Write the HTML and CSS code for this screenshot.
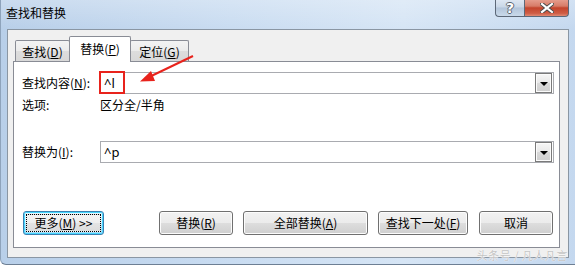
FILE: index.html
```html
<!DOCTYPE html>
<html>
<head>
<meta charset="utf-8">
<link rel="stylesheet" href="styles.css">
</head>
<body>
<div class="window">
  <div class="titlebar">
    <span class="title">查找和替换</span>
    <div class="caps">
      <div class="cap help">?</div>
      <div class="cap close">
        <svg width="14" height="10" viewBox="0 0 14 10"><path d="M2 1 L12 9 M12 1 L2 9" stroke="#4a4a4a" stroke-width="4" stroke-linecap="square"/><path d="M2 1 L12 9 M12 1 L2 9" stroke="#fff" stroke-width="2.2" stroke-linecap="square"/></svg>
      </div>
    </div>
  </div>
  <div class="client">
    <div class="tabs">
      <div class="tab t1">查找(<u>D</u>)</div>
      <div class="tab active">替换(<u>P</u>)</div>
      <div class="tab t3">定位(<u>G</u>)</div>
    </div>
    <div class="panel">
      <div class="row r1">
        <span class="lbl">查找内容(<u>N</u>):</span>
        <div class="combo">
          <span class="val">^l</span>
          <span class="mark"></span>
          <div class="drop"><span class="tri"></span></div>
        </div>
      </div>
      <div class="row r2">
        <span class="lbl">选项:</span>
        <span>区分全/半角</span>
      </div>
      <div class="row r3">
        <span class="lbl">替换为(<u>I</u>):</span>
        <div class="combo">
          <span class="val">^p</span>
          <div class="drop"><span class="tri"></span></div>
        </div>
      </div>
      <div class="btnrow">
        <div class="btn more"><span class="focus">更多(<u>M</u>) &gt;&gt;</span></div>
        <div class="group">
          <div class="btn w74">替换(<u>R</u>)</div>
          <div class="btn w125">全部替换(<u>A</u>)</div>
          <div class="btn w90">查找下一处(<u>F</u>)</div>
          <div class="btn w74 last">取消</div>
        </div>
      </div>
    </div>
  </div>
  <svg class="arrow" width="70" height="40" viewBox="0 0 70 40">
    <path d="M62 1 L14 24" stroke="#e8231c" stroke-width="2" fill="none"/>
    <path d="M9 26.5 L20 16 L24 26 Z" fill="#e8231c"/>
  </svg>
  <div class="watermark">头条号 / 凡人凡言</div>
</div>
</body>
</html>
```
FILE: styles.css
```css
html, body {
  margin: 0;
  padding: 0;
  background: #ffffff;
}
.window {
  position: relative;
  width: 575px;
  height: 264px;
  border-bottom: 1px solid #6d7f94;
  border-left: 1px solid #8ea3bb;
  box-sizing: content-box;
  border-bottom-left-radius: 6px;
  overflow: hidden;
  background: linear-gradient(90deg, #b8cfe9 0%, #c9dcf1 40%, #d6e5f5 70%, #c4d8ef 100%);
  font-family: "Noto Sans", "Noto Sans CJK SC", sans-serif;
  font-size: 12px;
  color: #000;
}
.titlebar {
  display: flex;
  align-items: flex-start;
  height: 29px;
  background: linear-gradient(180deg, rgba(255,255,255,0.25), rgba(255,255,255,0));
}
.title {
  margin-left: 5px;
  margin-top: 5px;
  line-height: 16px;
  font-family: "Noto Sans CJK SC", sans-serif;
  font-size: 12px;
  color: #000;
}
.caps {
  display: flex;
  margin-left: auto;
  margin-right: 7px;
  margin-top: -2px;
}
.cap {
  height: 19px;
  box-sizing: border-box;
  border: 1px solid #5c6878;
  border-top: none;
  display: flex;
  align-items: center;
  justify-content: center;
}
.help {
  width: 29px;
  border-bottom-left-radius: 4px;
  border-right: none;
  background: linear-gradient(180deg, #e3ebf5 0%, #c9d7e7 50%, #b3c5da 55%, #c9d9ea 100%);
  color: #fff;
  font-weight: bold;
  font-size: 14px;
  line-height: 14px;
  padding-top: 2px;
  font-family: "DejaVu Sans", sans-serif;
  text-shadow: -1px 0 #5a6470, 1px 0 #5a6470, 0 -1px #5a6470, 0 1px #5a6470;
}
.close {
  width: 45px;
  border-bottom-right-radius: 4px;
  background: linear-gradient(180deg, #e9a697 0%, #d77c68 45%, #c3442c 55%, #cf5d45 85%, #e08a75 100%);
  padding-top: 2px;
}
.client {
  margin-left: 6px;
  width: 562px;
  height: 229px;
  box-sizing: border-box;
  border: 1px solid #8a96a3;
  background: #f0f0f0;
  padding-top: 6px;
}
.tabs {
  display: flex;
  align-items: flex-end;
  height: 25px;
  margin-left: 5px;
  padding-left: 2px;
  font-family: "Noto Sans CJK SC", sans-serif;
}
.tab {
  box-sizing: border-box;
  height: 21px;
  border: 1px solid #898c95;
  border-bottom: none;
  border-radius: 2px 2px 0 0;
  background: linear-gradient(180deg, #f3f3f3 0%, #ebebeb 50%, #dddddd 51%, #d8d8d8 100%);
  text-align: center;
  line-height: 16px;
  padding-top: 3px;
}
.t1 { width: 55px; }
.active {
  position: relative;
  z-index: 1;
  width: 62px;
  height: 26px;
  margin-left: -1px;
  margin-bottom: -1px;
  background: #ffffff;
  padding-top: 4px;
}
.t3 {
  width: 59px;
  margin-left: -1px;
}
.panel {
  margin-left: 5px;
  width: 547px;
  height: 187px;
  box-sizing: border-box;
  border: 1px solid #898c95;
  background: #ffffff;
  padding: 10px 5px 0 8px;
  display: flex;
  flex-direction: column;
  font-family: "Noto Sans CJK SC", sans-serif;
}
.row {
  display: flex;
  align-items: center;
}
.lbl {
  width: 78px;
  flex: none;
  line-height: 16px;
}
.r2 {
  margin-top: 3px;
  line-height: 16px;
}
.r3 {
  margin-top: 28px;
}
.combo {
  position: relative;
  flex: 1;
  height: 22px;
  box-sizing: border-box;
  border: 1px solid #a9abb0;
  display: flex;
  align-items: center;
}
.val {
  padding-left: 3px;
  font-family: "Noto Sans", sans-serif;
  font-size: 13px;
  line-height: 16px;
}
.mark {
  position: absolute;
  left: -2px;
  top: -2px;
  width: 26px;
  height: 23px;
  box-sizing: border-box;
  border: 2px solid #e8231c;
}
.drop {
  margin-left: auto;
  margin-right: 1px;
  width: 17px;
  height: 20px;
  box-sizing: border-box;
  border: 1px solid #7a7a7a;
  background: linear-gradient(180deg, #f6f6f6 0%, #e8e8e8 50%, #d9d9d9 51%, #cfcfcf 100%);
  box-shadow: inset 0 0 0 1px #fbfbfb;
  display: flex;
  align-items: center;
  justify-content: center;
}
.tri {
  width: 0;
  height: 0;
  border-left: 4px solid transparent;
  border-right: 4px solid transparent;
  border-top: 4px solid #000;
  margin-top: 1px;
}
.btnrow {
  margin-top: 48px;
  display: flex;
  align-items: center;
}
.btn {
  height: 24px;
  box-sizing: border-box;
  border: 1px solid #707070;
  border-radius: 3px;
  background: linear-gradient(180deg, #f2f2f2 0%, #ebebeb 50%, #dddddd 51%, #cfcfcf 100%);
  box-shadow: inset 0 0 0 1px #fcfcfc;
  display: flex;
  align-items: center;
  justify-content: center;
  line-height: 16px;
}
.more {
  margin-left: 1px;
  width: 81px;
  border-color: #3c7fb1;
  background: linear-gradient(180deg, #eaf6fd 0%, #d9f0fc 50%, #bee6fd 51%, #a7d9f5 100%);
  box-shadow: inset 0 0 0 1px #48d8ff;
  padding: 2px;
}
.focus {
  flex: 1;
  align-self: stretch;
  border: 1px dotted #000;
  display: flex;
  align-items: center;
  justify-content: center;
  background: linear-gradient(180deg, #f4f4f4 0%, #eeeeee 50%, #e4e4e4 51%, #dcdcdc 100%);
}
.group {
  margin-left: auto;
  margin-right: 1px;
  display: flex;
  gap: 10px;
}
.w74 { width: 74px; }
.w125 { width: 125px; }
.w90 { width: 90px; }
.last { margin-left: 1px; }
.arrow {
  position: absolute;
  left: 130px;
  top: 55px;
}
.watermark {
  position: absolute;
  right: 8px;
  bottom: 2px;
  font-family: "Noto Sans CJK SC", sans-serif;
  font-size: 11px;
  line-height: 13px;
  color: #c4c4c4;
  text-shadow: 0 0 1px #fff, 0 0 1px #fff;
  letter-spacing: 0.5px;
}
```
